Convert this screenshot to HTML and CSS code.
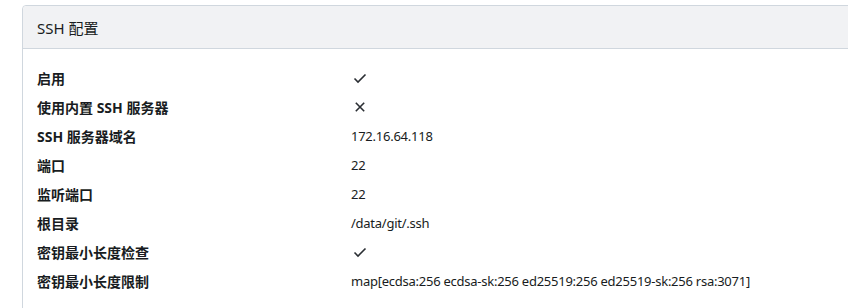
FILE: index.html
```html
<!DOCTYPE html>
<html lang="zh-CN">
<head>
<meta charset="utf-8">
<link rel="stylesheet" href="styles.css">
</head>
<body>
<div class="page">
  <section class="card">
    <h4 class="card-header">SSH 配置</h4>
    <dl class="card-body">
      <dt>启用</dt>
      <dd><svg class="icon" viewBox="0 0 16 16" width="16" height="16"><path d="M2.5 8.5l3.5 3.5 7.5-7.5" fill="none" stroke="#2a2e33" stroke-width="1.6"/></svg></dd>
      <dt>使用内置 SSH 服务器</dt>
      <dd><svg class="icon" viewBox="0 0 16 16" width="16" height="16"><path d="M3.8 3.8l8.4 8.4M12.2 3.8l-8.4 8.4" fill="none" stroke="#2a2e33" stroke-width="1.6"/></svg></dd>
      <dt>SSH 服务器域名</dt>
      <dd>172.16.64.118</dd>
      <dt>端口</dt>
      <dd>22</dd>
      <dt>监听端口</dt>
      <dd>22</dd>
      <dt>根目录</dt>
      <dd>/data/git/.ssh</dd>
      <dt>密钥最小长度检查</dt>
      <dd><svg class="icon" viewBox="0 0 16 16" width="16" height="16"><path d="M2.5 8.5l3.5 3.5 7.5-7.5" fill="none" stroke="#2a2e33" stroke-width="1.6"/></svg></dd>
      <dt>密钥最小长度限制</dt>
      <dd>map[ecdsa:256 ecdsa-sk:256 ed25519:256 ed25519-sk:256 rsa:3071]</dd>
    </dl>
  </section>
</div>
</body>
</html>
```
FILE: styles.css
```css
html, body {
  margin: 0;
  padding: 0;
  background: #fff;
  overflow: hidden;
}
body {
  font-family: "Noto Sans", "Noto Sans CJK SC", sans-serif;
  color: #181c21;
  font-size: 14px;
}
.page {
  padding: 5px 0 0 22px;
}
.card {
  width: 880px;
  border: 1px solid #d0d7de;
  border-radius: 4px;
  background: #fff;
  height: 320px;
}
.card-header {
  margin: 0;
  height: 42px;
  display: flex;
  align-items: center;
  padding: 0 14px;
  background: #f1f2f4;
  border-bottom: 1px solid #d0d7de;
  border-radius: 4px 4px 0 0;
  font-size: 15px;
  font-weight: normal;
}
.card-body {
  margin: 0;
  padding: 14px 14px;
  display: grid;
  grid-template-columns: 314px 1fr;
  grid-auto-rows: 29px;
  align-items: center;
}
dt {
  font-weight: bold;
}
dd {
  margin: 0;
  display: flex;
  align-items: center;
  font-size: 13px;
  letter-spacing: -0.25px;
}
.icon {
  display: block;
  margin-left: 1px;
}
```
